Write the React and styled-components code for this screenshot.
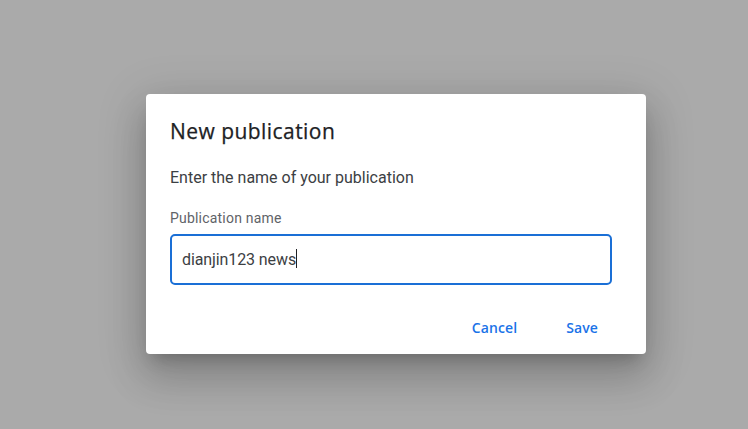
import React from 'react'
import { styled, createGlobalStyle } from 'styled-components'

const Global = createGlobalStyle`
  html, body {
    margin: 0;
    padding: 0;
    background: #aaaaaa;
    font-family: Roboto, "Noto Sans", Arial, sans-serif;
  }
`

const Page = styled.div`
  width: 748px;
  height: 429px;
  display: flex;
  justify-content: flex-start;
  align-items: flex-start;
  padding: 94px 0 0 146px;
  box-sizing: border-box;
`

const Dialog = styled.div`
  width: 500px;
  height: 260px;
  box-sizing: border-box;
  background: #fff;
  border-radius: 4px;
  box-shadow: 0 11px 15px -7px rgba(0, 0, 0, 0.2), 0 24px 38px 3px rgba(0, 0, 0, 0.14),
    0 9px 46px 8px rgba(0, 0, 0, 0.12);
  padding: 23px 34px 0 24px;
  display: flex;
  flex-direction: column;
`

const Title = styled.h2`
  margin: 0;
  font-family: "Open Sans", Roboto, sans-serif;
  font-size: 21px;
  font-weight: 400;
  line-height: 28px;
  color: #202124;
  letter-spacing: 0.45px;
  -webkit-text-stroke: 0.25px #202124;
`

const Message = styled.p`
  margin: 23px 0 0;
  font-size: 16px;
  line-height: 20px;
  color: #3c4043;
`

const Label = styled.label`
  margin-top: 22px;
  font-size: 14px;
  line-height: 16px;
  color: #5f6368;
  letter-spacing: 0.2px;
`

const Field = styled.div`
  margin-top: 8px;
  height: 51px;
  box-sizing: border-box;
  border: 2px solid #1a6fd6;
  border-radius: 5px;
  display: flex;
  align-items: center;
  padding: 0 10px;
`

const Value = styled.span`
  font-size: 16px;
  color: #3c4043;
  letter-spacing: -0.1px;
`

const Caret = styled.span`
  display: inline-block;
  width: 1px;
  height: 19px;
  background: #202124;
  margin-top: -2px;
`

const Actions = styled.div`
  display: flex;
  justify-content: flex-end;
  gap: 17px;
  margin-top: 24px;
  margin-right: -2px;
`

const Button = styled.button`
  border: none;
  background: none;
  height: 36px;
  padding: 0 16px;
  font-family: "Open Sans", Roboto, sans-serif;
  font-size: 14px;
  font-weight: 600;
  color: #1a73e8;
  letter-spacing: 0.1px;
  cursor: pointer;
`

export default function App() {
  return (
    <>
      <Global />
      <Page>
        <Dialog>
          <Title>New publication</Title>
          <Message>Enter the name of your publication</Message>
          <Label>Publication name</Label>
          <Field>
            <Value>dianjin123 news</Value>
            <Caret />
          </Field>
          <Actions>
            <Button>Cancel</Button>
            <Button>Save</Button>
          </Actions>
        </Dialog>
      </Page>
    </>
  )
}
